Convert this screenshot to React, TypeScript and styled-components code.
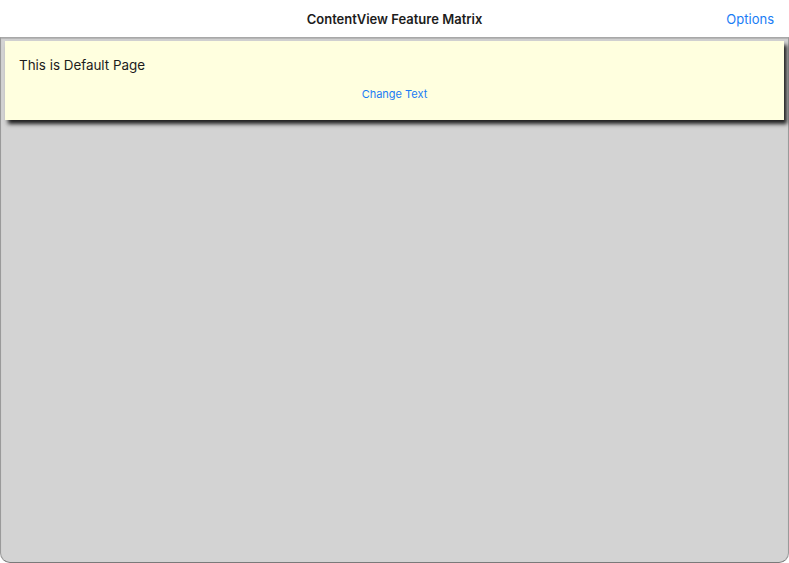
import React from 'react';
import styled, { createGlobalStyle } from 'styled-components';

const Global = createGlobalStyle`
  html, body {
    margin: 0;
    padding: 0;
    background: #ffffff;
  }
  body {
    font-family: Inter, "Noto Sans", "Liberation Sans", sans-serif;
  }
`;

const Window = styled.div`
  display: flex;
  flex-direction: column;
  width: 789px;
  height: 563px;
  overflow: hidden;
`;

const NavBar = styled.header`
  position: relative;
  display: flex;
  align-items: center;
  justify-content: center;
  height: 37px;
  flex-shrink: 0;
  background: #ffffff;
`;

const Title = styled.h1`
  margin: 0;
  font-size: 13px;
  font-weight: 600;
  color: #1c1c1c;
`;

const NavButton = styled.button`
  position: absolute;
  right: 15px;
  top: 11px;
  border: 0;
  padding: 0;
  background: none;
  font-family: inherit;
  font-size: 13px;
  color: #1a7cf5;
  cursor: pointer;
`;

const Content = styled.main`
  flex: 1;
  display: flex;
  flex-direction: column;
  padding: 3px 4px 0 4px;
  background: #d3d3d3;
  border-top: 1px solid #a8a8a8;
  border-left: 1px solid #9a9a9a;
  border-right: 1px solid #9a9a9a;
  border-bottom: 1px solid #7a7a7a;
  border-radius: 0 0 10px 10px;
  box-shadow: inset 0 1px 1px rgba(0, 0, 0, 0.15);
`;

const Card = styled.section`
  display: flex;
  flex-direction: column;
  height: 79px;
  box-sizing: border-box;
  padding: 15px 14px 0 14px;
  background: #ffffdf;
  box-shadow: 3px 4px 4px rgba(0, 0, 0, 0.85);
`;

const Label = styled.p`
  margin: 0;
  font-size: 13.4px;
  line-height: 18px;
  color: #1c1c1c;
`;

const LinkButton = styled.button`
  align-self: center;
  margin-top: 13px;
  border: 0;
  padding: 0;
  background: none;
  font-family: inherit;
  font-size: 11px;
  color: #1a7cf5;
  cursor: pointer;
`;

export default function App() {
  return (
    <>
      <Global />
      <Window>
        <NavBar>
          <Title>ContentView Feature Matrix</Title>
          <NavButton>Options</NavButton>
        </NavBar>
        <Content>
          <Card>
            <Label>This is Default Page</Label>
            <LinkButton>Change Text</LinkButton>
          </Card>
        </Content>
      </Window>
    </>
  );
}
